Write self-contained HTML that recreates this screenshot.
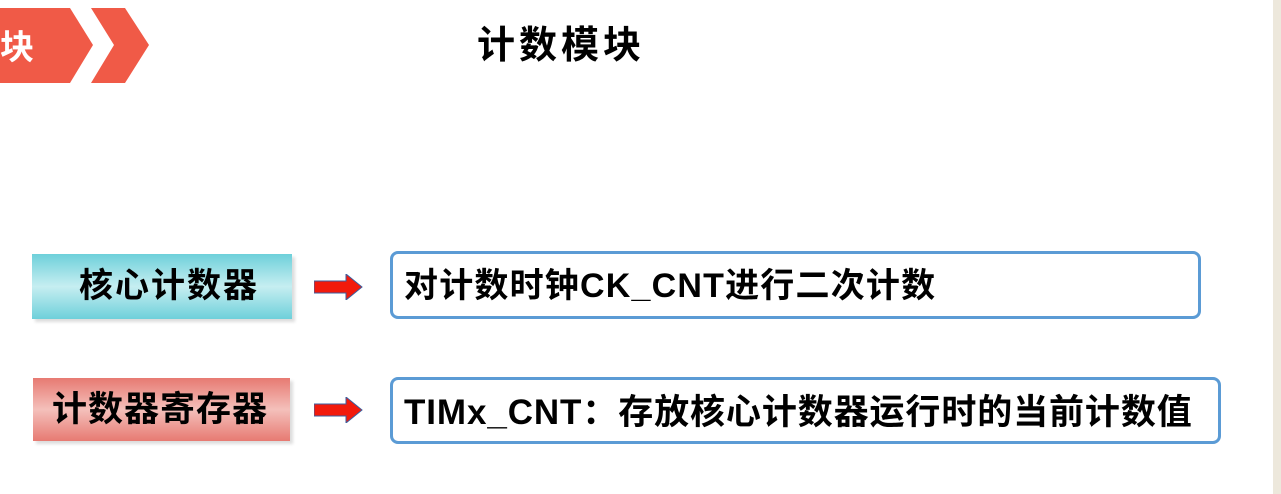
<!DOCTYPE html>
<html><head><meta charset="utf-8"><style>
body{margin:0;width:1281px;height:494px;background:#fff;position:relative;overflow:hidden;font-family:"Liberation Sans","Noto Sans CJK SC",sans-serif;font-weight:bold}
.a{position:absolute}
.strip{left:1273px;top:0;width:8px;height:494px;background:#ede8dc}
.t{white-space:nowrap;color:#000}
.bx{border:3px solid #5b9bd5;border-radius:8px;box-sizing:border-box;background:#fff}
</style></head><body>
<div class="a strip"></div>
<svg class="a" style="left:0;top:0" width="160" height="90">
<polygon points="0,8 70,8 93,45 70,83 0,83" fill="#f05a47"/>
<polygon points="91,8 125,8 149,45 125,83 91,83 114,45" fill="#f05a47"/>
</svg>
<div class="a t" style="left:0;top:26px;font-size:34px;color:#fff;line-height:44px">块</div>
<div class="a t" style="left:477px;top:22px;font-size:38px;letter-spacing:4px;line-height:48px">计数模块</div>

<div class="a" style="left:32px;top:254px;width:260px;height:65px;background:linear-gradient(#6ed0da,#c6eef1 50%,#6ed0da);box-shadow:3px 3px 3px #ddd"></div>
<div class="a t" style="left:79px;top:264px;font-size:34px;letter-spacing:2px;line-height:44px">核心计数器</div>
<div class="a" style="left:33px;top:378px;width:257px;height:63px;background:linear-gradient(#e77a72,#f4c0bb 50%,#e77a72);box-shadow:3px 3px 3px #ddd"></div>
<div class="a t" style="left:52px;top:388px;font-size:35px;letter-spacing:1px;line-height:44px">计数器寄存器</div>

<svg class="a" style="left:314px;top:274px" width="50" height="26"><polygon points="0,7 32,7 32,0 48,13 32,26 32,19 0,19" fill="#f21a0c" stroke="#3a5fa0" stroke-width="1"/></svg>
<svg class="a" style="left:314px;top:397px" width="50" height="26"><polygon points="0,7 32,7 32,0 48,13 32,26 32,19 0,19" fill="#f21a0c" stroke="#3a5fa0" stroke-width="1"/></svg>

<div class="a bx" style="left:390px;top:251px;width:811px;height:68px"></div>
<div class="a t" style="left:404px;top:264px;font-size:34px;letter-spacing:1.2px;line-height:44px">对计数时钟CK_CNT进行二次计数</div>
<div class="a bx" style="left:390px;top:377px;width:831px;height:67px"></div>
<div class="a t" style="left:404px;top:391px;font-size:35px;letter-spacing:0.9px;line-height:44px">TIMx_CNT：存放核心计数器运行时的当前计数值</div>
</body></html>
